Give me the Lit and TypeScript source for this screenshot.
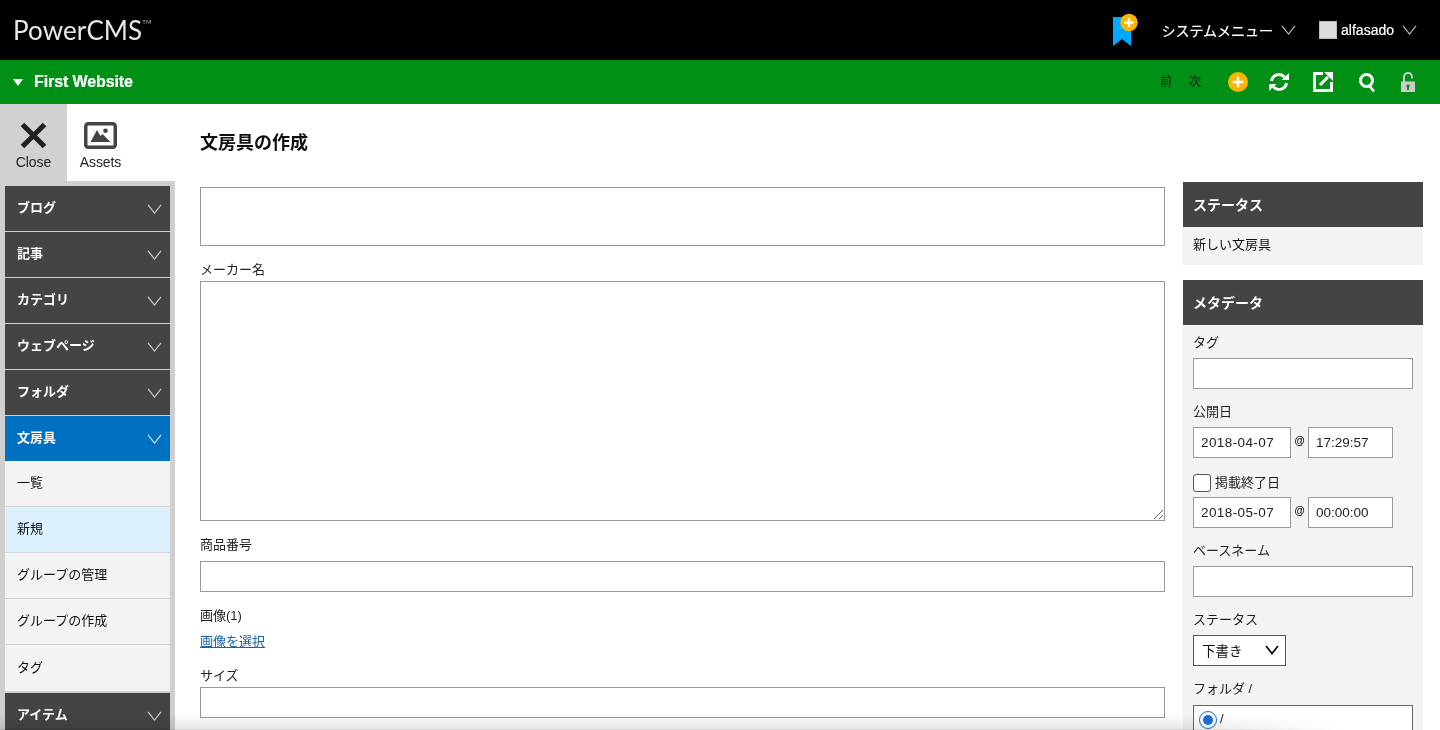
import { LitElement, html, css } from "lit";
import { customElement } from "lit/decorators.js";

const chev = (color: string) => html`<svg class="chev" width="15" height="10" viewBox="0 0 15 10"><path d="M1 .8 7.500 9 14 .8" fill="none" stroke=${color} stroke-width="1.200"/></svg>`;

@customElement("app-root")
export class AppRoot extends LitElement {
  static styles = css`
    :host { display: block; width: 1440px; height: 730px; overflow: hidden; position: relative; background: #fff; font-family: "Liberation Sans", "Noto Sans CJK JP", sans-serif; font-size: 13px; color: #111; }
    * { box-sizing: border-box; }
    .top { height: 60px; background: #000; display: flex; align-items: center; padding-left: 13px; color: #fff; }
    .logo { font-family: Lato, "Liberation Sans", sans-serif; font-size: 26px; color: #e8e8e8; display: flex; font-weight: 400; letter-spacing: .1px; }
    .logo sup { font-size: 6px; line-height: 1; margin-top: 5px; color: #bbb; margin-left: 0; }
    .spacer { flex: 1; }
    .bm { display: block; margin-right: 23px; align-self: flex-start; margin-top: 12px; }
    .sys { font-size: 14px; margin-right: 8px; -webkit-text-stroke: .2px #fff; }
    .top .chev { margin-right: 23px; display: block; }
    .avatar { width: 18px; height: 18px; background: #ddd; border: 1px solid #bbb; margin-right: 4px; }
    .user { font-size: 14px; margin-right: 8px; -webkit-text-stroke: .2px #fff; }
    .green { height: 44px; background: #009016; display: flex; align-items: center; padding-left: 13px; color: #fff; }
    .tri { width: 0; height: 0; border-left: 5px solid transparent; border-right: 5px solid transparent; border-top: 7px solid #fff; margin-right: 11px; }
    .site { font-size: 16px; font-weight: 700; -webkit-text-stroke: .2px #fff; letter-spacing: -.1px; }
    .nav { font-size: 12px; color: #111; margin-right: 17px; line-height: 16px; }
    .nav.n2 { margin-right: 27px; }
    .gi { display: block; flex: none; }
    .gap21 { margin-right: 21px; }
    .gap24 { margin-right: 24px; }
    .gap26 { margin-right: 26px; }
    .gap25 { margin-right: 25px; }
    .body { display: flex; height: 626px; }
    .side { width: 175px; flex: none; }
    .tabs { display: flex; height: 77px; }
    .tab { width: 67px; display: flex; flex-direction: column; align-items: center; padding-top: 18px; font-size: 14px; line-height: 16px; color: #222; letter-spacing: -.1px; }
    .tab.on { background: #d1d1d1; }
    .tab svg { display: block; margin-bottom: 5px; }
    .menu { background: #cfcfcf; padding: 5px 5px 0; height: 549px; }
    .mi { height: 45px; margin-bottom: 1px; width: 165px; background: #444; color: #fff; font-size: 13px; font-weight: 700; display: flex; align-items: center; justify-content: space-between; padding: 0 8px 5px 12px; }
    .mi .chev { margin-top: 5px; }
    .mi.active { background: #0070c0; margin-bottom: 0; }
    .mi.last { margin-top: 2px; }
    .sub { height: 46px; width: 165px; background: #f3f3f3; border-bottom: 1px solid #d2d2d2; display: flex; align-items: center; padding: 0 12px 4px; font-size: 13px; color: #111; }
    .sub.cur { background: #dcf1fd; }
    .sub.end { margin-bottom: 1px; border-bottom: 0; }
    .main { flex: 1; padding: 0 0 0 25px; min-width: 0; }
    h1 { font-size: 18px; font-weight: 700; margin: 0; padding-top: 28px; line-height: 22px; height: 83px; color: #111; }
    .cols { display: flex; gap: 18px; }
    .form { width: 965px; flex: none; }
    .box { display: block; width: 100%; border: 1px solid #999; background: #fff; }
    label { display: block; font-size: 13px; line-height: 16px; color: #222; }
    .f1 { height: 59px; }
    .fl1 { margin-top: 16px; margin-bottom: 3px; }
    .ta { height: 240px; position: relative; }
    .grip { position: absolute; right: 1px; bottom: 1px; }
    .fl2 { margin-top: 16px; margin-bottom: 8px; }
    .f3 { height: 31px; }
    .fl3 { margin-top: 16px; margin-bottom: 10px; }
    a { display: block; font-size: 13px; line-height: 16px; color: #1a62a8; text-decoration: underline; }
    .fl4 { margin-top: 18px; margin-bottom: 3px; }
    .panelcol { width: 240px; flex: none; margin-top: -5px; }
    .phead { height: 45px; background: #444; color: #fff; font-size: 14px; font-weight: 700; display: flex; align-items: center; padding: 0 0 2px 10px; }
    .pbody { background: #f3f3f3; padding: 10px; font-size: 13px; color: #111; }
    .pb1 { height: 38px; margin-bottom: 15px; line-height: 16px; }
    .pb2 { height: 470px; }
    .pb2 label { margin-bottom: 7px; }
    .pb2 label.ml8 { margin-bottom: 8px; }
    .inp { height: 31px; background: #fff; border: 1px solid #999; }
    .mt { margin-top: 15px; }
    .dt { display: flex; align-items: flex-start; }
    .d, .t { height: 31px; background: #fff; border: 1px solid #999; padding-left: 7px; line-height: 30px; font-size: 13.500px; color: #222; }
    .d { width: 98px; letter-spacing: .4px; }
    .t { width: 85px; }
    .at { width: 17px; text-align: center; font-size: 10.500px; font-weight: 700; line-height: 26px; }
    .chk { display: flex; align-items: center; gap: 4px; margin-top: 16px; margin-bottom: 5px; height: 18px; font-size: 13px; color: #222; }
    .chk span { padding-bottom: 3px; }
    .cb { width: 18px; height: 18px; border: 1px solid #555; border-radius: 3px; background: #fff; }
    .sel { width: 93px; height: 31px; background: #fff; border: 1px solid #555; display: flex; align-items: center; justify-content: space-between; padding: 0 6px 2px 8px; font-size: 13.500px; }
    .radio { height: 40px; background: #fff; border: 1px solid #666; display: flex; align-items: flex-start; padding: 5px 0 0 5px; gap: 3px; font-size: 13px; line-height: 16px; }
    .rd { width: 18px; height: 18px; border: 1.500px solid #1a6fd8; border-radius: 50%; display: flex; align-items: center; justify-content: center; }
    .rd i { display: block; width: 10px; height: 10px; border-radius: 50%; background: #1a6fd8; }
    .fade { position: absolute; left: 0; width: 1340px; bottom: 0; height: 16px; background: linear-gradient(to bottom, rgba(238,238,238,0), #e8e8e8 92%, #c8c8c8); mix-blend-mode: multiply; -webkit-mask-image: linear-gradient(to right, #000 88%, transparent); mask-image: linear-gradient(to right, #000 88%, transparent); pointer-events: none; }
  `;

  render() {
    const menu1 = ["ブログ", "記事", "カテゴリ", "ウェブページ", "フォルダ"];
    const subs = ["一覧", "新規", "グループの管理", "グループの作成", "タグ"];
    return html`
      <div class="top">
        <div class="logo">PowerCMS<sup>TM</sup></div>
        <div class="spacer"></div>
        <svg class="bm" width="26" height="34" viewBox="0 0 26 34">
          <path d="M1 5h18v29l-9-7-9 7z" fill="#00aaff"/>
          <circle cx="17" cy="10.500" r="8.700" fill="#ffb400"/>
          <path d="M17 6v9M12.500 10.500h9" stroke="#fff" stroke-width="2.400"/>
        </svg>
        <span class="sys">システムメニュー</span>${chev("#bbb")}
        <div class="avatar"></div>
        <span class="user">alfasado</span>
        ${chev("#bbb")}
      </div>
      <div class="green">
        <div class="tri"></div>
        <div class="site">First Website</div>
        <div class="spacer"></div>
        <span class="nav">前</span><span class="nav n2">次</span>
        <svg class="gi gap21" width="20" height="20" viewBox="0 0 20 20">
          <circle cx="10" cy="10" r="10" fill="#ffb400"/><path d="M10 4.500v11M4.500 10h11" stroke="#fff" stroke-width="2.600"/>
        </svg>
        <svg class="gi gap24" width="20" height="20" viewBox="0 0 20 20">
          <path d="M2.500 9A7.500 7.500 0 0 1 15.500 5" fill="none" stroke="#fff" stroke-width="3"/>
          <path d="M12.500 8H20V1z" fill="#fff"/>
          <path d="M17.500 11A7.500 7.500 0 0 1 4.500 15" fill="none" stroke="#fff" stroke-width="3"/>
          <path d="M7.500 12H0V19z" fill="#fff"/>
        </svg>
        <svg class="gi gap26" width="20" height="20" viewBox="0 0 20 20">
          <path d="M10 1.500H1.500V18.500H18.500V10" fill="none" stroke="#fff" stroke-width="3"/>
          <path d="M7 13 15 5" stroke="#fff" stroke-width="3"/>
          <path d="M11 0h9v9z" fill="#fff"/>
        </svg>
        <svg class="gi gap26" width="16" height="19" viewBox="0 0 16 19">
          <circle cx="7.500" cy="7.500" r="6" fill="none" stroke="#fff" stroke-width="3"/>
          <path d="M10.500 13 15 18.500" stroke="#fff" stroke-width="2.500"/>
        </svg>
        <svg class="gi gap25" width="14" height="20" viewBox="0 0 14 20">
          <path d="M3 10V5a4 4 0 0 1 8 0v1.500" fill="none" stroke="#ccc" stroke-width="2"/>
          <rect y="9.500" width="14" height="10.500" fill="#ccc"/>
          <path d="M7 12l2.500 2.500H8V18H6v-3.500H4.500z" fill="#009016"/>
        </svg>
      </div>
      <div class="body">
        <div class="side">
          <div class="tabs">
            <div class="tab on">
              <svg width="27" height="27" viewBox="0 0 27 27"><path d="M2.500 2.500 24.500 24.500M24.500 2.500 2.500 24.500" stroke="#222" stroke-width="5" fill="none"/></svg>
              Close
            </div>
            <div class="tab">
              <svg width="33" height="27" viewBox="0 0 33 27">
                <rect x="1.750" y="1.750" width="29.500" height="23.500" rx="2.500" fill="none" stroke="#444" stroke-width="3.500"/>
                <path d="M6.500 20 13 8l3.500 6 2-2 8 8z" fill="#444"/>
                <circle cx="21.500" cy="8.700" r="2.300" fill="#444"/>
              </svg>
              Assets
            </div>
          </div>
          <div class="menu">
            ${menu1.map((m) => html`<div class="mi"><span>${m}</span>${chev("#ccc")}</div>`)}
            <div class="mi active"><span>文房具</span>${chev("#cfe6f7")}</div>
            ${subs.map((s, i) => html`<div class="sub ${i === 1 ? "cur" : ""} ${i === 4 ? "end" : ""}">${s}</div>`)}
            <div class="mi last"><span>アイテム</span>${chev("#ccc")}</div>
          </div>
        </div>
        <div class="main">
          <h1>文房具の作成</h1>
          <div class="cols">
            <div class="form">
              <div class="box f1"></div>
              <label class="fl1">メーカー名</label>
              <div class="box ta">
                <svg class="grip" width="9" height="9" viewBox="0 0 9 9"><path d="M0 9 9 0M5 9 9 5" stroke="#666" stroke-width="1"/></svg>
              </div>
              <label class="fl2">商品番号</label>
              <div class="box f3"></div>
              <label class="fl3">画像(1)</label>
              <a href="#" @click=${(e: Event) => e.preventDefault()}>画像を選択</a>
              <label class="fl4">サイズ</label>
              <div class="box f3"></div>
            </div>
            <div class="panelcol">
              <div class="phead">ステータス</div>
              <div class="pbody pb1">新しい文房具</div>
              <div class="phead">メタデータ</div>
              <div class="pbody pb2">
                <label>タグ</label>
                <div class="inp"></div>
                <label class="mt">公開日</label>
                <div class="dt"><div class="d">2018-04-07</div><span class="at">@</span><div class="t">17:29:57</div></div>
                <div class="chk"><div class="cb"></div><span>掲載終了日</span></div>
                <div class="dt"><div class="d">2018-05-07</div><span class="at">@</span><div class="t">00:00:00</div></div>
                <label class="mt">ベースネーム</label>
                <div class="inp"></div>
                <label class="mt">ステータス</label>
                <div class="sel"><span>下書き</span><svg width="14" height="10" viewBox="0 0 14 10"><path d="M1 1l6 7.500L13 1" fill="none" stroke="#111" stroke-width="1.800"/></svg></div>
                <label class="mt ml8">フォルダ /</label>
                <div class="radio"><div class="rd"><i></i></div>/</div>
              </div>
            </div>
          </div>
        </div>
      </div>
      <div class="fade"></div>
    `;
  }
}
